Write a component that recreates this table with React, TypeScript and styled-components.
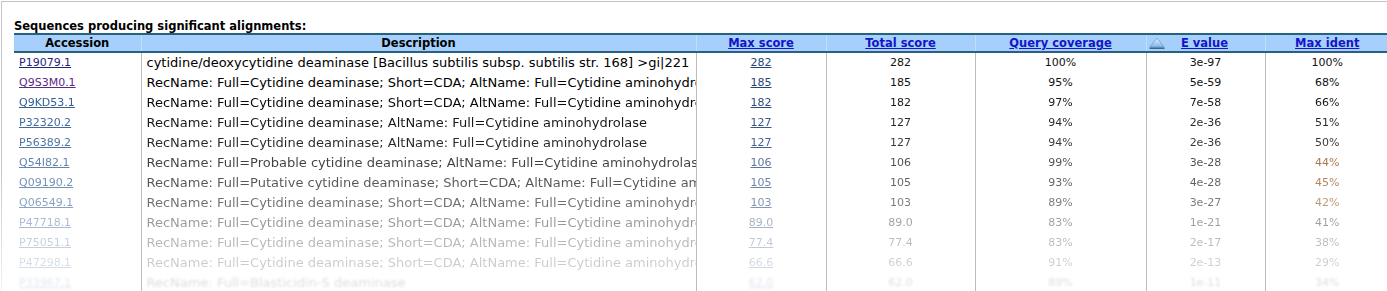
import { FC } from 'react';
import styled, { createGlobalStyle } from 'styled-components';

const GlobalStyle = createGlobalStyle`
  body {
    margin: 0;
    background: #fff;
    font-family: 'DejaVu Sans', Verdana, sans-serif;
  }
`

type Hit = {
    acc: string;
    accColor: string;
    desc: string;
    max: string;
    total: string;
    cover: string;
    evalue: string;
    ident: string;
    identColor?: string;
    fade: number;
    blur?: number;
}

const FULL_CDA = 'RecName: Full=Cytidine deaminase; Short=CDA; AltName: Full=Cytidine aminohydrolase'
const ALT_CDA = 'RecName: Full=Cytidine deaminase; AltName: Full=Cytidine aminohydrolase'

const hits: Hit[] = [
    {acc: 'P19079.1', accColor: '#23237a', desc: 'cytidine/deoxycytidine deaminase [Bacillus subtilis subsp. subtilis str. 168] >gi|221', max: '282', total: '282', cover: '100%', evalue: '3e-97', ident: '100%', fade: 1},
    {acc: 'Q9S3M0.1', accColor: '#5a2a86', desc: FULL_CDA, max: '185', total: '185', cover: '95%', evalue: '5e-59', ident: '68%', fade: 1},
    {acc: 'Q9KD53.1', accColor: '#2c5a92', desc: FULL_CDA, max: '182', total: '182', cover: '97%', evalue: '7e-58', ident: '66%', fade: 0.97},
    {acc: 'P32320.2', accColor: '#2c5a92', desc: ALT_CDA, max: '127', total: '127', cover: '94%', evalue: '2e-36', ident: '51%', fade: 0.9},
    {acc: 'P56389.2', accColor: '#2c5a92', desc: ALT_CDA, max: '127', total: '127', cover: '94%', evalue: '2e-36', ident: '50%', fade: 0.84},
    {acc: 'Q54I82.1', accColor: '#2c5a92', desc: 'RecName: Full=Probable cytidine deaminase; AltName: Full=Cytidine aminohydrolase', max: '106', total: '106', cover: '99%', evalue: '3e-28', ident: '44%', identColor: '#8a4a10', fade: 0.74},
    {acc: 'Q09190.2', accColor: '#2c5a92', desc: 'RecName: Full=Putative cytidine deaminase; Short=CDA; AltName: Full=Cytidine aminohydrolase', max: '105', total: '105', cover: '93%', evalue: '4e-28', ident: '45%', identColor: '#8a4a10', fade: 0.66},
    {acc: 'Q06549.1', accColor: '#2c5a92', desc: FULL_CDA, max: '103', total: '103', cover: '89%', evalue: '3e-27', ident: '42%', identColor: '#8a4a10', fade: 0.56},
    {acc: 'P47718.1', accColor: '#2c5a92', desc: FULL_CDA, max: '89.0', total: '89.0', cover: '83%', evalue: '1e-21', ident: '41%', fade: 0.4, blur: 0.2},
    {acc: 'P75051.1', accColor: '#2c5a92', desc: FULL_CDA, max: '77.4', total: '77.4', cover: '83%', evalue: '2e-17', ident: '38%', fade: 0.28, blur: 0.5},
    {acc: 'P47298.1', accColor: '#2c5a92', desc: FULL_CDA, max: '66.6', total: '66.6', cover: '91%', evalue: '2e-13', ident: '29%', fade: 0.2, blur: 0.7},
    {acc: 'P33967.1', accColor: '#2c5a92', desc: 'RecName: Full=Blasticidin-S deaminase', max: '62.0', total: '62.0', cover: '89%', evalue: '1e-11', ident: '34%', fade: 0.14, blur: 0.8},
]

const SortArrow: FC = () => (
    <svg width="16" height="12" viewBox="0 0 16 12">
        <defs>
            <linearGradient id="tri" x1="0" y1="0" x2="0" y2="1">
                <stop offset="0" stopColor="#e4f2ff" />
                <stop offset="1" stopColor="#7fb6ea" />
            </linearGradient>
        </defs>
        <path d="M8 1 L15 10 L1 10 Z" fill="url(#tri)" stroke="#6a9ccc" strokeWidth="0.8" />
        <path d="M0.5 11.2 H15.5" stroke="#3d5a78" strokeWidth="1.4" />
    </svg>
)

export default function App() {
    return (
        <>
            <GlobalStyle />
            <Page>
                <Title>Sequences producing significant alignments:</Title>
                <Table>
                    <colgroup>
                        <col style={{width: 127}} />
                        <col style={{width: 555}} />
                        <col style={{width: 130}} />
                        <col style={{width: 149}} />
                        <col style={{width: 171}} />
                        <col style={{width: 119}} />
                        <col style={{width: 124}} />
                    </colgroup>
                    <thead>
                        <tr>
                            <Th>Accession</Th>
                            <Th>Description</Th>
                            <Th><HeadLink>Max score</HeadLink></Th>
                            <Th><HeadLink>Total score</HeadLink></Th>
                            <Th><HeadLink>Query coverage</HeadLink></Th>
                            <Th>
                                <SortHead>
                                    <SortArrow />
                                    <HeadLink>E value</HeadLink>
                                    <span />
                                </SortHead>
                            </Th>
                            <Th><HeadLink>Max ident</HeadLink></Th>
                        </tr>
                    </thead>
                    <tbody>
                        {hits.map(h => (
                            <Row key={h.acc} $fade={h.fade} $blur={h.blur ?? 0}>
                                <AccCell><AccLink $color={h.accColor}>{h.acc}</AccLink></AccCell>
                                <DescCell>{h.desc}</DescCell>
                                <NumCell><ScoreLink>{h.max}</ScoreLink></NumCell>
                                <NumCell>{h.total}</NumCell>
                                <NumCell>{h.cover}</NumCell>
                                <NumCell>{h.evalue}</NumCell>
                                <NumCell $color={h.identColor}>{h.ident}</NumCell>
                            </Row>
                        ))}
                    </tbody>
                </Table>
            </Page>
        </>
    )
}

const Page = styled.div`
    margin: 1px 0 0 1px;
    height: 290px;
    box-sizing: border-box;
    border-top: 1px solid #c6c6c6;
    border-left: 1px solid #c6c6c6;
    border-image: linear-gradient(to bottom, #c4c4c4 55%, #f2f2f2) 1;
    padding: 17px 0 0 12px;
    overflow: hidden;
`

const Title = styled.div`
    font-size: 11.5px;
    font-weight: bold;
    line-height: 14px;
    color: #000;
    white-space: nowrap;
`

const Table = styled.table`
    table-layout: fixed;
    width: 1375px;
    border-collapse: collapse;
    font-size: 11px;
`

const Th = styled.th`
    background: #a6d0fb;
    border-top: 2px solid #24627f;
    border-bottom: 2px solid #24627f;
    border-left: 1px solid #c3dff8;
    height: 16px;
    padding: 0 4px;
    font-size: 11.5px;
    font-weight: bold;
    color: #000;
    text-align: center;
    white-space: nowrap;
    line-height: 14px;

    &:first-child {
        border-left: none;
    }
`

const HeadLink = styled.a`
    color: #1414c8;
    text-decoration: underline;
    cursor: pointer;
`

const SortHead = styled.div`
    display: grid;
    grid-template-columns: 18px 1fr 18px;
    align-items: center;
    margin-left: -2px;
`

const Row = styled.tr<{$fade: number; $blur: number}>`
    height: 20px;
    opacity: ${({$fade}) => $fade};
    filter: ${({$blur}) => $blur ? `blur(${$blur}px)` : 'none'};
`

const Cell = styled.td`
    border-left: 1px solid #bdbdbd;
    padding: 0;
    height: 20px;
    white-space: nowrap;
    overflow: hidden;
    line-height: 20px;

    &:first-child {
        border-left: none;
    }
`

const AccCell = styled(Cell)`
    padding-left: 5px;
`

const AccLink = styled.a<{$color: string}>`
    color: ${({$color}) => $color};
    text-decoration: underline;
    font-size: 11px;
    cursor: pointer;
`

const DescCell = styled(Cell)`
    padding-left: 5px;
    font-size: 13px;
    color: #000;
    text-overflow: clip;
`

const NumCell = styled(Cell)<{$color?: string}>`
    text-align: center;
    color: ${({$color}) => $color ?? '#111'};
`

const ScoreLink = styled.a`
    color: #24467a;
    text-decoration: underline;
    cursor: pointer;
`
